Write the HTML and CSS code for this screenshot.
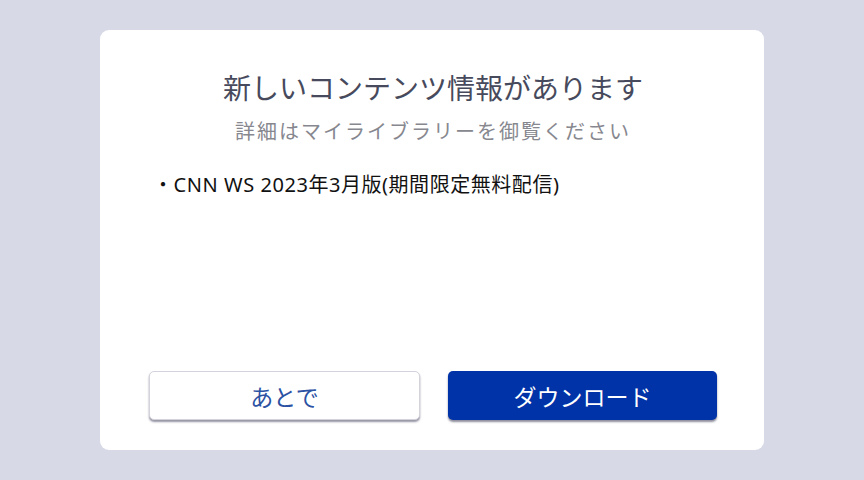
FILE: index.html
```html
<!DOCTYPE html>
<html lang="ja">
<head>
<meta charset="utf-8">
<link rel="stylesheet" href="styles.css">
</head>
<body>
<div class="card">
  <h1 class="title">新しいコンテンツ情報があります</h1>
  <p class="subtitle">詳細はマイライブラリーを御覧ください</p>
  <ul class="list">
    <li>・CNN WS 2023年3月版(期間限定無料配信)</li>
  </ul>
  <div class="actions">
    <button class="btn btn-later">あとで</button>
    <button class="btn btn-download">ダウンロード</button>
  </div>
</div>
</body>
</html>
```

FILE: styles.css
```css
html, body {
  margin: 0;
  padding: 0;
}
body {
  width: 864px;
  height: 480px;
  background: #d8d9e7;
  display: flex;
  align-items: center;
  justify-content: center;
  font-family: "Noto Sans CJK JP", "Noto Sans", sans-serif;
}
.card {
  width: 664px;
  height: 420px;
  box-sizing: border-box;
  background: #ffffff;
  border-radius: 9px;
  display: flex;
  flex-direction: column;
  align-items: center;
  padding: 38px 47px 30px 49px;
}
.title {
  margin: 0;
  font-size: 28px;
  font-weight: 400;
  line-height: 38px;
  color: #474a5c;
}
.subtitle {
  margin: 10px 0 0;
  font-size: 20px;
  letter-spacing: 2px;
  line-height: 30px;
  color: #87888f;
}
.list {
  list-style: none;
  align-self: stretch;
  margin: 24px 0 0;
  padding: 0 0 0 4px;
  font-family: "Noto Sans", "Noto Sans CJK JP", sans-serif;
  font-size: 20px;
  letter-spacing: 0.55px;
  line-height: 30px;
  color: #111;
}
.actions {
  margin-top: auto;
  align-self: stretch;
  display: flex;
  gap: 28px;
}
.btn {
  flex: 1;
  height: 49px;
  border-radius: 5px;
  font-family: "Noto Sans CJK JP", "Noto Sans", sans-serif;
  font-size: 23px;
  cursor: pointer;
}
.btn-later {
  background: #ffffff;
  color: #2b52a3;
  border: 1px solid #d5d2dc;
  box-shadow: 0 2px 2px rgba(60, 60, 90, 0.55);
}
.btn-download {
  background: #0032a8;
  color: #ffffff;
  border: none;
  box-shadow: 0 2px 2px rgba(30, 30, 60, 0.5);
}
```
